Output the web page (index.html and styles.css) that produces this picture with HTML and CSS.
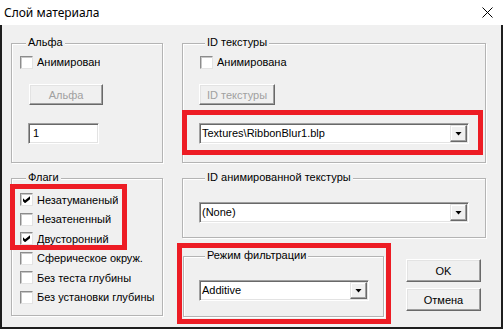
FILE: index.html
```html
<!DOCTYPE html>
<html lang="ru">
<head>
  <meta charset="UTF-8">
  <title>Слой материала</title>
  <link rel="stylesheet" href="styles.css">
</head>
<body>

<div class="window">
  <div class="titlebar">
    <span class="title">Слой материала</span>
    <svg class="close" width="11" height="11" viewBox="0 0 11 11">
      <path d="M0.5 0.5L10.5 10.5M10.5 0.5L0.5 10.5" stroke="#000" stroke-width="1" fill="none"/>
    </svg>
  </div>

  <div class="client">
    <div class="col-left">
      <div class="group alpha">
        <div class="group-title">Альфа</div>
        <label class="check"><span class="box"></span><span class="text">Анимирован</span></label>
        <button class="btn disabled alpha-btn">Альфа</button>
        <div class="edit">1</div>
      </div>

      <div class="group flags">
        <div class="group-title">Флаги</div>
        <label class="check row"><span class="box checked"></span><span class="text">Незатуманеный</span></label>
        <label class="check row"><span class="box"></span><span class="text">Незатененный</span></label>
        <label class="check row"><span class="box checked"></span><span class="text">Двусторонний</span></label>
        <label class="check row"><span class="box"></span><span class="text">Сферическое окруж.</span></label>
        <label class="check row"><span class="box"></span><span class="text">Без теста глубины</span></label>
        <label class="check row"><span class="box"></span><span class="text clip-long">Без установки глубины</span></label>
      </div>
    </div>

    <div class="col-right">
      <div class="group texture">
        <div class="group-title">ID текстуры</div>
        <label class="check"><span class="box"></span><span class="text">Анимирована</span></label>
        <button class="btn disabled tex-btn">ID текстуры</button>
        <div class="combo wide">
          <span class="value">Textures\RibbonBlur1.blp</span>
          <span class="drop"><i class="arrow"></i></span>
        </div>
      </div>

      <div class="group anim">
        <div class="group-title">ID анимированной текстуры</div>
        <div class="combo wide">
          <span class="value">(None)</span>
          <span class="drop"><i class="arrow"></i></span>
        </div>
      </div>

      <div class="bottom-row">
        <div class="group filter">
          <div class="group-title">Режим фильтрации</div>
          <div class="combo narrow">
            <span class="value">Additive</span>
            <span class="drop"><i class="arrow"></i></span>
          </div>
        </div>
        <div class="actions">
          <button class="btn">OK</button>
          <button class="btn">Отмена</button>
        </div>
      </div>
    </div>
  </div>

  <!-- red marks drawn over the dialog -->
  <div class="mark mark-flags"></div>
  <div class="mark mark-texture"></div>
  <div class="mark mark-filter"></div>
</div>

</body>
</html>
```

FILE: styles.css
```css
* {
  box-sizing: border-box;
}

body {
  margin: 0;
  background: #1e1e1e;
  font-family: 'Liberation Sans', Arial, sans-serif;
  font-size: 11px;
  color: #000;
}

.window {
  position: relative;
  width: 503px;
  height: 329px;
}

.titlebar {
  height: 25px;
  background: #fff;
  display: flex;
  align-items: center;
  justify-content: space-between;
  padding: 0 10px 0 4px;
}

.title {
  font-family: 'Noto Sans', 'Open Sans', sans-serif;
  font-size: 12px;
  line-height: 25px;
}

.close {
  display: block;
  margin-top: -1px;
}

.client {
  height: 304px;
  background: #f0f0f0;
  border-left: 2px solid #1e1e1e;
  border-right: 2px solid #1e1e1e;
  border-bottom: 2px solid #1e1e1e;
  display: flex;
  padding: 18px 0 0 9px;
}

.col-left {
  width: 152px;
}

.col-right {
  width: 304px;
  margin-left: 19px;
}

/* group boxes */
.group {
  border: 1px solid #b4b4b4;
  box-shadow: inset 1px 1px 0 #fff, 1px 1px 0 #fff;
}

.group-title {
  width: fit-content;
  margin: -9px 0 0 6px;
  padding: 0 2px;
  line-height: 14px;
  background: #f0f0f0;
  white-space: nowrap;
}

.alpha, .texture {
  height: 120px;
}

.alpha {
  padding-left: 8px;
}

.texture {
  padding-left: 16px;
}

.flags {
  height: 138px;
  margin-top: 15px;
  padding-left: 8px;
}

.flags .group-title {
  margin-bottom: 6px;
}

.anim {
  height: 60px;
  margin-top: 15px;
  padding-left: 16px;
}

.bottom-row {
  display: flex;
  margin-top: 18px;
}

.filter {
  width: 201px;
  height: 61px;
  margin-left: 1px;
  padding-left: 15px;
}

.actions {
  display: flex;
  flex-direction: column;
  gap: 6px;
  margin: 3px 0 0 22px;
}

/* checkboxes */
.check {
  display: flex;
  align-items: center;
  gap: 4px;
  height: 14px;
  margin-top: 6px;
  white-space: nowrap;
}

.texture .check {
  margin-left: 1px;
}

.check.row {
  height: 19.5px;
  margin-top: 0;
}

.box {
  flex: none;
  width: 13px;
  height: 13px;
  background: #fff;
  border: 1px solid;
  border-color: #8c8c8c #e3e3e3 #e3e3e3 #8c8c8c;
  box-shadow: inset 1px 1px 0 #c8c8c8;
  position: relative;
}

.box.checked::after {
  content: "";
  position: absolute;
  left: 2px;
  top: 2px;
  width: 7px;
  height: 7px;
  background: #000;
  clip-path: polygon(0 29%, 29% 57%, 100% 0, 100% 43%, 29% 100%, 0 71%);
}

.text {
  overflow: hidden;
}

.clip-long {
  width: 118px;
}

/* buttons */
.btn {
  font: inherit;
  color: #000;
  background: #f0f0f0;
  height: 23px;
  width: 75px;
  padding: 0;
  border: 1px solid;
  border-color: #fff #696969 #696969 #fff;
  box-shadow: inset -1px -1px 0 #a0a0a0, inset 1px 1px 0 #e3e3e3;
  display: block;
}

.btn.disabled {
  color: #a0a0a0;
  height: 21px;
}

.alpha-btn {
  width: 74px;
  margin: 15px 0 0 9px;
}

.tex-btn {
  width: 76px;
  margin-top: 15px;
}

/* edit and combo boxes */
.edit {
  width: 71px;
  height: 21px;
  margin: 18px 0 0 8px;
  padding: 0 0 0 4px;
  line-height: 19px;
  background: #fff;
  border: 1px solid;
  border-color: #a0a0a0 #fff #fff #a0a0a0;
  box-shadow: inset 1px 1px 0 #696969, inset -1px -1px 0 #e3e3e3;
}

.combo {
  display: flex;
  height: 21px;
  padding: 1px;
  background: #fff;
  border: 1px solid;
  border-color: #a0a0a0 #fff #fff #a0a0a0;
  box-shadow: inset 1px 1px 0 #696969, inset -1px -1px 0 #e3e3e3;
}

.combo.wide {
  width: 270px;
}

.texture .combo {
  margin-top: 18px;
}

.anim .combo {
  margin-top: 18px;
}

.combo.narrow {
  width: 170px;
  margin-top: 18px;
}

.value {
  flex: 1;
  padding-left: 1px;
  line-height: 17px;
  white-space: nowrap;
  overflow: hidden;
}

.drop {
  flex: none;
  width: 17px;
  display: flex;
  align-items: center;
  justify-content: center;
  background: #f0f0f0;
  border: 1px solid;
  border-color: #e3e3e3 #696969 #696969 #e3e3e3;
  box-shadow: inset -1px -1px 0 #a0a0a0, inset 1px 1px 0 #fff;
}

.arrow {
  width: 7px;
  height: 4px;
  background: #000;
  clip-path: polygon(0 0, 100% 0, 50% 100%);
}

/* annotation frames */
.mark {
  position: absolute;
  border: 5px solid #ed1c24;
}

.mark-flags {
  left: 10px;
  top: 184px;
  width: 117px;
  height: 66px;
}

.mark-texture {
  left: 182px;
  top: 110px;
  width: 301px;
  height: 45px;
}

.mark-filter {
  left: 177px;
  top: 243px;
  width: 214px;
  height: 81px;
}
```
